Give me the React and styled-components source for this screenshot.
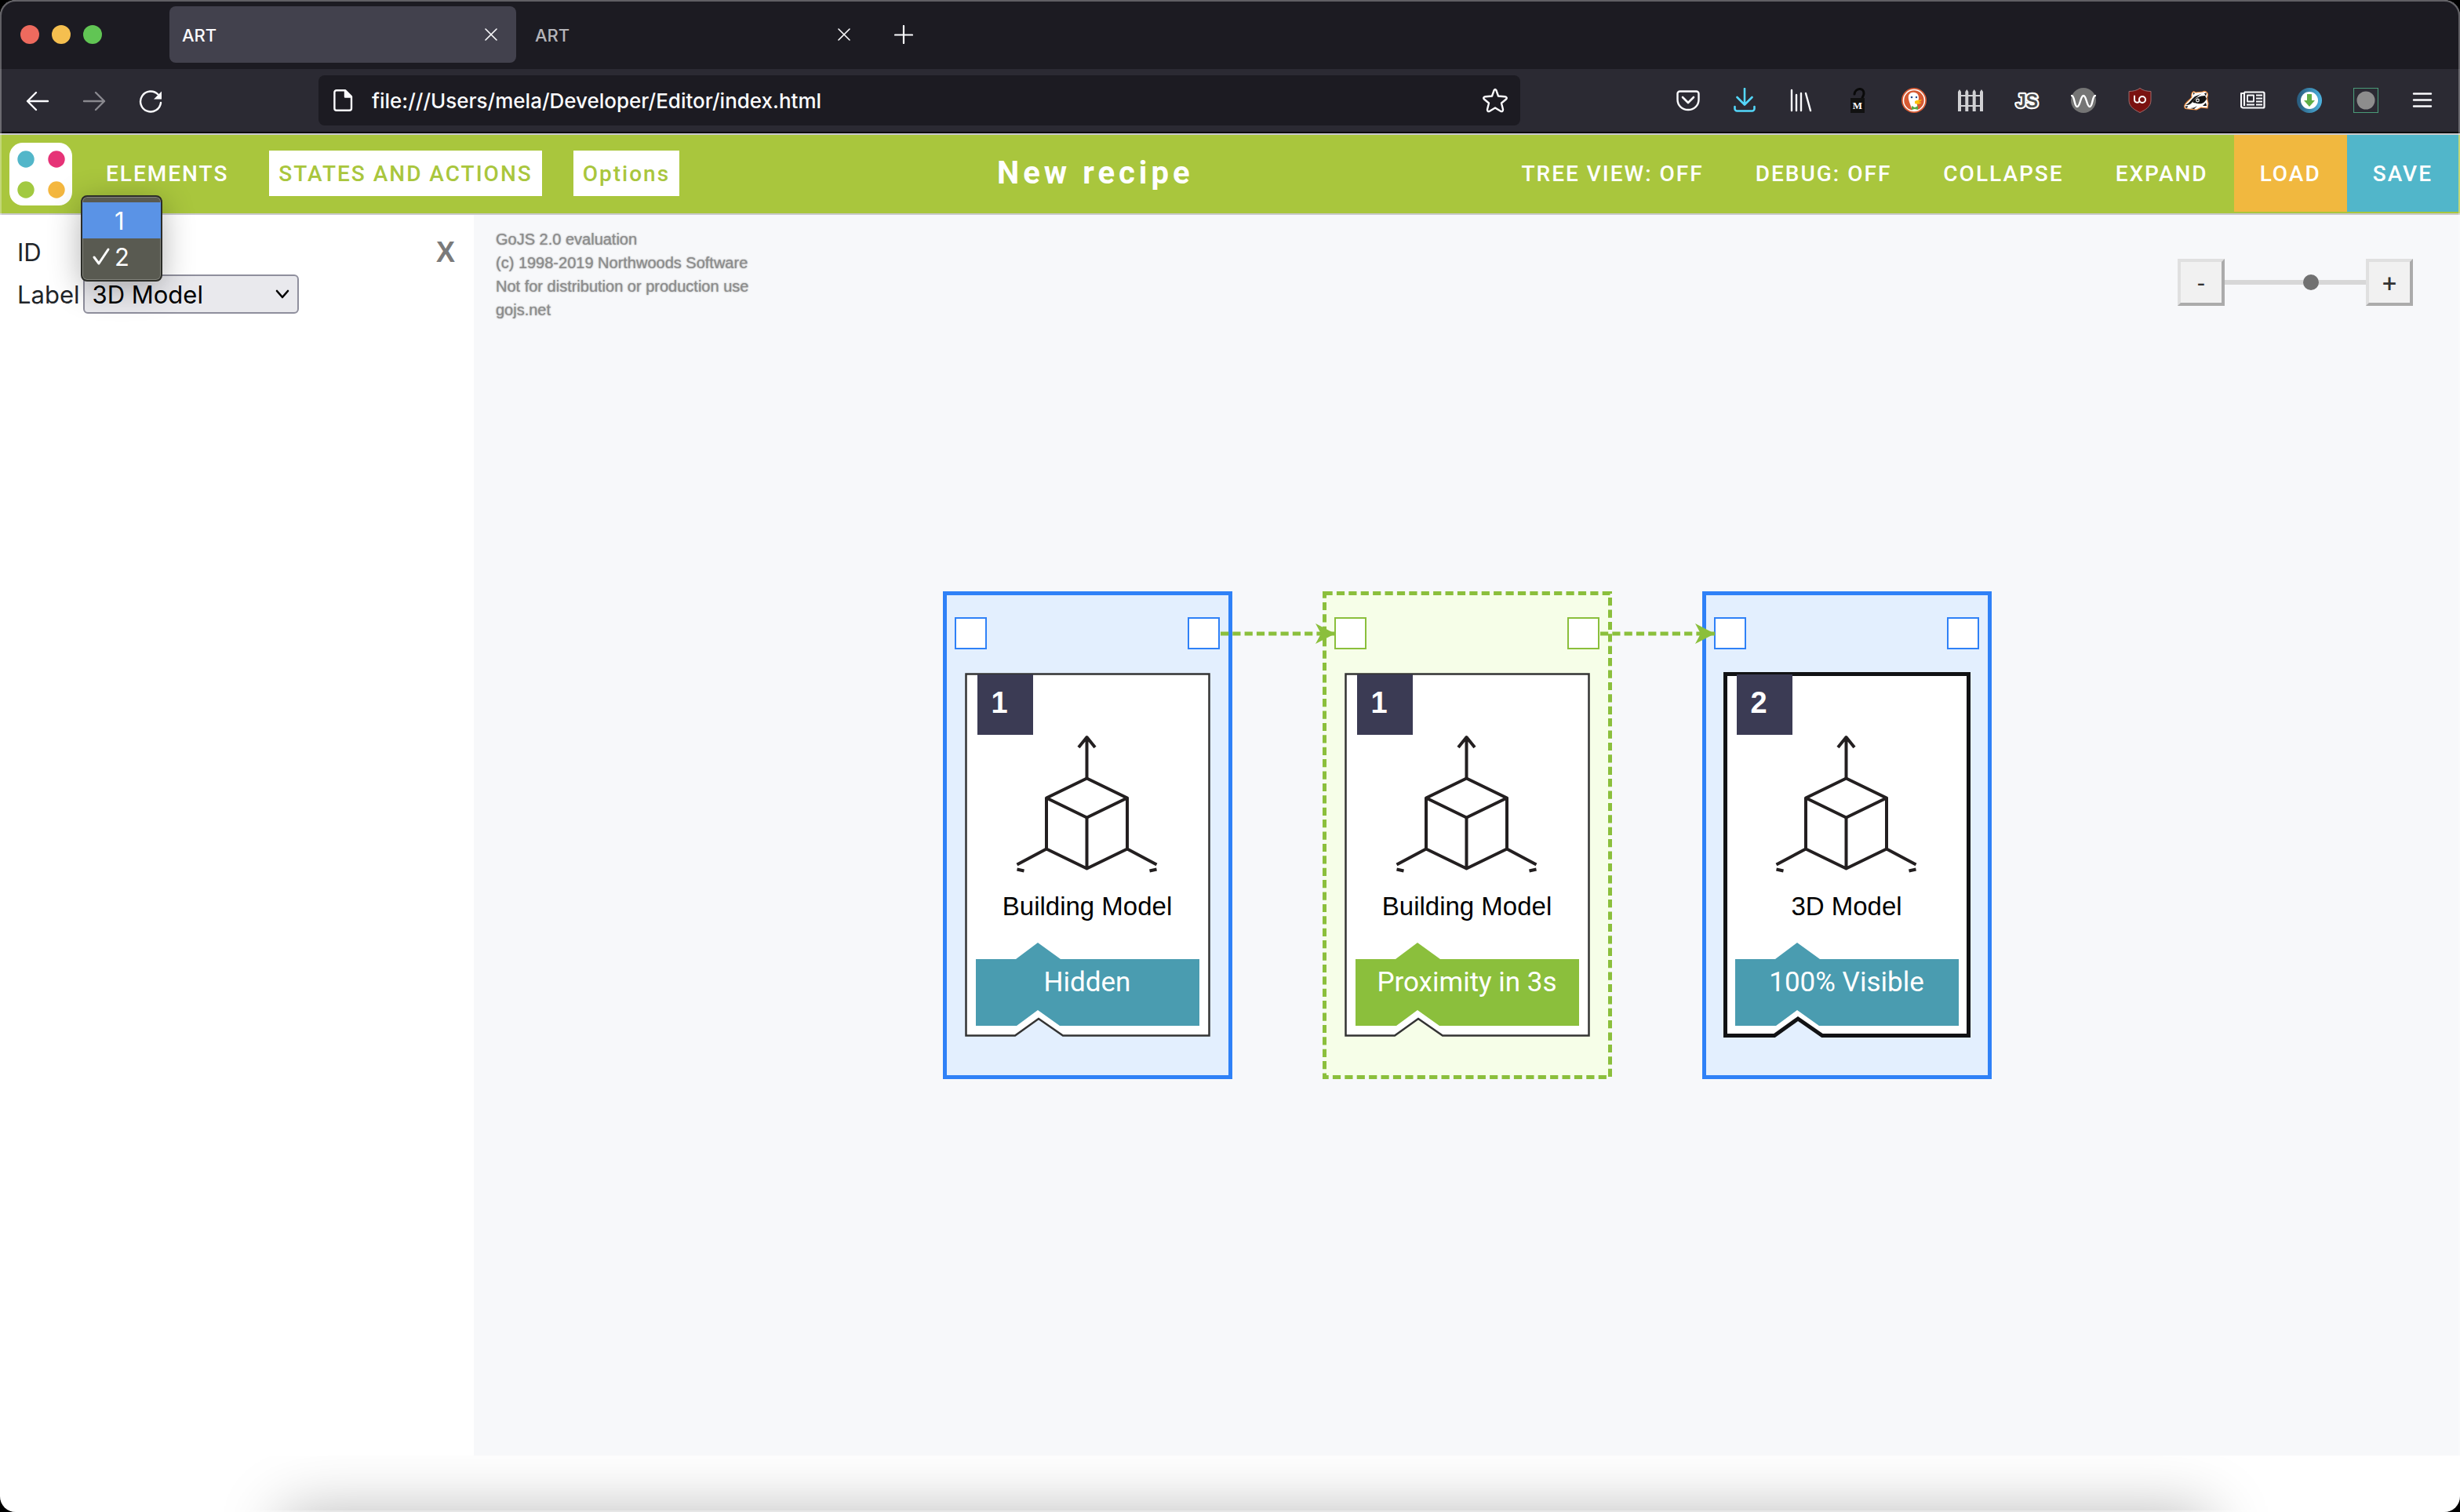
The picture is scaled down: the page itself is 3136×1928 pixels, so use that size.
import React, { useState } from "react";
import styled, { createGlobalStyle } from "styled-components";

const UI = `Inter, "Noto Sans", sans-serif`;
const BRAND = `Roboto, "Open Sans", sans-serif`;
const HELV = `"Liberation Sans", Arial, sans-serif`;

const GlobalStyle = createGlobalStyle`
  *, *::before, *::after { box-sizing: border-box; }
  body { margin: 0; background: #000; font-family: ${UI}; }
  button, input, select { font: inherit; margin: 0; }
`;

/* ---------- window ---------- */

const Window = styled.div`
  position: relative;
  display: flex;
  flex-direction: column;
  min-height: 100vh;
  border-radius: 20px;
  overflow: hidden;
  background: #fff;

  &::after {
    content: "";
    position: absolute;
    inset: 0;
    border: 2px solid rgba(255, 255, 255, 0.3);
    border-radius: 20px;
    pointer-events: none;
    z-index: 9;
  }
`;

const TabStrip = styled.div`
  display: flex;
  align-items: center;
  gap: 8px;
  height: 88px;
  padding-left: 26px;
  background: #1c1b22;
`;

const Lights = styled.div`
  display: flex;
  gap: 16px;
  width: 182px;
`;

const Light = styled.button`
  width: 24px;
  height: 24px;
  padding: 0;
  border: 0;
  border-radius: 50%;
  background: ${(p) => p.$color};
`;

const Tab = styled.div`
  display: flex;
  align-items: center;
  justify-content: space-between;
  width: 442px;
  height: 72px;
  padding: 0 16px;
  border-radius: 8px;
  background: ${(p) => (p.$active ? "#42414d" : "transparent")};
  color: ${(p) => (p.$active ? "#fbfbfe" : "#b4b4b9")};
`;

const TabTitle = styled.span`
  padding-top: 2px;
  font-size: 22px;
  font-weight: 500;
  line-height: 32px;
`;

const IconButton = styled.button`
  display: flex;
  align-items: center;
  justify-content: center;
  width: ${(p) => p.$w || 72}px;
  height: 48px;
  padding: 0;
  border: 0;
  background: none;
  color: #fbfbfe;
  opacity: ${(p) => (p.disabled ? 0.45 : 1)};
`;

const NavBar = styled.div`
  display: flex;
  align-items: center;
  height: 82px;
  padding: 0 12px;
  background: #2b2a33;
  border-bottom: 2px solid #0c0c0d;
`;

const Group = styled.div`
  display: flex;
  align-items: center;
`;

const UrlBar = styled.label`
  display: flex;
  flex: 1;
  align-items: center;
  gap: 20px;
  height: 64px;
  margin: 0 178px;
  padding: 0 8px 0 16px;
  border-radius: 8px;
  background: #1c1b22;
  color: #fbfbfe;
`;

const PageGlyph = styled.span`
  display: flex;
`;

const UrlInput = styled.input`
  flex: 1;
  min-width: 0;
  padding: 2px 0 0;
  border: 0;
  outline: 0;
  background: none;
  color: inherit;
  font-size: 26px;
  font-weight: 500;
  line-height: 36px;
`;

/* ---------- application header ---------- */

const Header = styled.header`
  display: flex;
  align-items: center;
  height: 104px;
  padding: 0 2px 0 12px;
  border: solid #c9c9cc;
  border-width: 2px 0;
  background: #a9c63d;
  font-family: ${BRAND};
`;

const ModeButton = styled.button`
  height: 58px;
  margin: 0 20px;
  padding: 0 12px;
  border: 0;
  background: ${(p) => (p.$boxed ? "#fff" : "transparent")};
  color: ${(p) => (p.$boxed ? "#a9c63d" : "#fff")};
  font-size: 28px;
  font-weight: 500;
  letter-spacing: 2px;
  white-space: nowrap;
`;

const Modes = styled.div`
  display: flex;
  padding: 0 0 2px 11px;
`;

const Title = styled.h1`
  flex: 1;
  margin: 0;
  padding-bottom: 2px;
  color: #fff;
  font-size: 40px;
  font-weight: 700;
  line-height: 48px;
  letter-spacing: 5px;
  text-align: center;
  white-space: nowrap;
`;

const Action = styled.button`
  height: 98px;
  margin-bottom: 2px;
  padding: 0 33px;
  border: 0;
  background: ${(p) => p.$bg || "transparent"};
  color: #fff;
  font-size: 28px;
  font-weight: 500;
  letter-spacing: 2px;
  white-space: nowrap;
`;

/* ---------- body ---------- */

const Body = styled.main`
  display: flex;
  flex: 1;
`;

const SidePanel = styled.aside`
  width: 604px;
  padding: 20px 24px 20px 22px;
  color: #212529;
  font-size: 31px;
`;

const Field = styled.div`
  position: relative;
  display: flex;
  align-items: center;
  gap: 4px;
  height: 54px;
`;

const CloseButton = styled.button`
  margin-left: auto;
  padding: 2px 0 0;
  border: 0;
  background: none;
  color: #7a7a7a;
  font-family: ${HELV};
  font-size: 36px;
  font-weight: 700;
`;

const SelectBox = styled.div`
  display: grid;
  align-items: center;
  width: 275px;

  & > * { grid-area: 1 / 1; }
  & > svg { justify-self: end; margin-right: 12px; pointer-events: none; }
`;

const Select = styled.select`
  appearance: none;
  width: 100%;
  height: 50px;
  padding: 0 10px;
  border: 2px solid #8f8f9d;
  border-radius: 6px;
  background: #e9e9ed;
  color: #000;
`;

const Popup = styled.ul`
  position: absolute;
  top: -45px;
  left: 81px;
  z-index: 3;
  width: 104px;
  margin: 0;
  padding: 7px 0;
  list-style: none;
  border: 2px solid #2c2d28;
  border-radius: 8px;
  background: #595a51;
  box-shadow: 0 8px 40px rgba(0, 0, 0, 0.3), inset 0 0 0 1px #83847c;
  color: #fff;
`;

const Option = styled.li`
  display: flex;
  align-items: center;
  gap: 5px;
  height: 46px;
  padding-left: 12px;
  background: ${(p) => (p.$hot ? "#5a93e6" : "transparent")};
`;

const Tick = styled.span`
  display: flex;
  width: 24px;
`;

const Canvas = styled.section`
  position: relative;
  display: flex;
  flex: 1;
  align-items: center;
  justify-content: center;
  background: #f7f8fa;
`;

const Watermark = styled.p`
  position: absolute;
  top: 16px;
  left: 28px;
  margin: 0;
  color: #8c8c8c;
  font-family: ${HELV};
  font-size: 20px;
  line-height: 30px;
  text-shadow: 0 0 2px #8c8c8c;
  white-space: pre-line;
`;

const ZoomBar = styled.div`
  position: absolute;
  top: 56px;
  right: 60px;
  display: flex;
  align-items: center;
`;

const ZoomButton = styled.button`
  width: 60px;
  height: 60px;
  padding: 2px 0 0;
  border: 4px solid;
  border-color: #e0e0e0 #ababab #ababab #e0e0e0;
  background: #f1f1f1;
  color: #333;
  font-family: ${BRAND};
  font-size: 32px;
`;

const Range = styled.input`
  appearance: none;
  width: 180px;
  height: 20px;
  background: linear-gradient(#d7d7d7, #d7d7d7) center / 100% 6px no-repeat;

  &::-webkit-slider-thumb {
    appearance: none;
    width: 20px;
    height: 20px;
    border-radius: 50%;
    background: #717171;
  }
`;

const Flow = styled.div`
  display: flex;
  gap: 115px;
`;

const Node = styled.article`
  position: relative;
  width: 369px;
  height: 622px;
  padding: 33px 16px 33px 15px;
`;

const Backdrop = styled.svg`
  position: absolute;
  top: 0;
  left: 0;
  overflow: visible;
`;

const Ports = styled.div`
  position: relative;
  display: flex;
  justify-content: space-between;
`;

const Port = styled.span`
  width: 41px;
  height: 41px;
  border: 2px solid ${(p) => p.$color};
  background: #fff;
`;

const LinkArrow = styled.svg`
  position: absolute;
  z-index: 1;
  top: 41px;
  left: 354px;
`;

const Card = styled.div`
  position: relative;
  display: flex;
  flex-direction: column;
  align-items: center;
  width: 313px;
  height: 464px;
  margin: 30px 0 0 13px;
  padding-top: 2px;
`;

const Badge = styled.span`
  position: relative;
  align-self: flex-start;
  width: 71px;
  height: 77px;
  margin-left: 16px;
  padding-left: 18px;
  background: #3b3b54;
  color: #fff;
  font-family: ${HELV};
  font-size: 38px;
  font-weight: 700;
  line-height: 72px;
`;

const CubeArt = styled.svg`
  position: relative;
  width: 182px;
  height: 178px;
`;

const CardTitle = styled.h2`
  position: relative;
  margin: 21px 0 26px;
  color: #000;
  font-family: ${HELV};
  font-size: 33px;
  font-weight: 400;
  line-height: 40px;
`;

const Banner = styled.div`
  position: relative;
  width: 285px;
  height: 106px;
  padding-top: 31px;
  color: #fff;
  font-family: ${BRAND};
  font-size: 35px;
  line-height: 40px;
  text-align: center;
`;

const BannerText = styled.span`
  position: relative;
`;

const Footer = styled.footer`
  height: 72px;
  padding: 72px 320px 0 360px;
  overflow: hidden;
`;

const DockShadow = styled.div`
  height: 200px;
  box-shadow: 0 0 80px rgba(0, 0, 0, 0.28);
`;

/* ---------- icons ---------- */

const Svg = ({ size = 32, children, ...rest }) => (
  <svg
    width={size}
    height={size}
    viewBox={`0 0 ${size} ${size}`}
    fill="none"
    stroke="currentColor"
    strokeWidth="2.4"
    strokeLinecap="round"
    strokeLinejoin="round"
    aria-hidden="true"
    {...rest}
  >
    {children}
  </svg>
);

const CloseIcon = () => (
  <Svg size={16} strokeWidth="1.6"><path d="M1 1l14 14M15 1L1 15" /></Svg>
);
const PlusIcon = () => (
  <Svg size={24} strokeWidth="2.2"><path d="M12 1v22M1 12.500h22" /></Svg>
);
const BackIcon = () => (
  <Svg><path d="M3 17h26M14 6L3 17l11 11" /></Svg>
);
const ForwardIcon = () => (
  <Svg><path d="M3 17h26M18 6l11 11-11 11" /></Svg>
);
const ReloadIcon = () => (
  <Svg>
    <path d="M29 19a13 13 0 1 1-3.500-10.500" />
    <path d="M30 4.500v10H20z" fill="currentColor" stroke="none" />
  </Svg>
);
const PageIcon = () => (
  <Svg>
    <path d="M7 3.200h11l8 8v15a2.600 2.600 0 0 1-2.600 2.600H7a2.600 2.600 0 0 1-2.600-2.600v-20.400A2.600 2.600 0 0 1 7 3.200z" />
    <path d="M18 4v7.500h7.500z" fill="currentColor" />
  </Svg>
);
const StarIcon = () => (
  <Svg>
    <path d="M14.600 3.100Q16 .8 17.400 3.100L20 10.500 28.500 11.200Q32 12 30 14.500L24 19.500 26 27.500Q26 31 23 29.800L16 25.500 9 29.800Q6 31 6 27.500L8 19.500 2 14.500Q0 12 3.500 11.200L12 10.500z" />
  </Svg>
);
const PocketIcon = () => (
  <Svg>
    <path d="M5.500 4.500h21a3 3 0 0 1 3 3V15c0 7.500-6 13-13.500 13S2.500 22.500 2.500 15V7.500a3 3 0 0 1 3-3z" />
    <path d="M9 12l7 7 7-7" strokeWidth="2.600" />
  </Svg>
);
const DownloadIcon = () => (
  <Svg stroke="#54d7fb" strokeWidth="2.600">
    <path d="M16 1v20M6.500 12l9.500 9.500 9.500-9.500M3.500 24v2.500a3 3 0 0 0 3 3h19a3 3 0 0 0 3-3V24" />
  </Svg>
);
const LibraryIcon = () => (
  <Svg><path d="M4 3v26M10 9v20M16 7v22M22 7l6 22" /></Svg>
);
const LockIcon = () => (
  <Svg>
    <path d="M12 8c1-8 12-9 12-1 0 4-3 5-2 8" stroke="#0a0a0a" strokeWidth="3" />
    <rect x="7" y="13" width="18" height="19" fill="#111" stroke="none" />
    <text x="16" y="27" textAnchor="middle" fill="#fff" stroke="none" fontFamily="Liberation Serif, serif" fontWeight="700" fontSize="13">M</text>
  </Svg>
);
const DuckIcon = () => (
  <Svg stroke="none">
    <circle cx="16" cy="16" r="16" fill="#d65a33" />
    <circle cx="16" cy="16" r="13.500" stroke="#fff" strokeWidth="1.500" />
    <path d="M14 29C11 20 8 15 9 10c1-4 5-5 8-4 4 1 5 4 5 7 0 4-3 6-2 9l1 6q-4 1.500-7 1z" fill="#fff" />
    <path d="M17 17c3-2 6-1 9-2-1 2-3 2.500-4 3 1 1 3 0 3 1-1 2-5 2-8 1z" fill="#fdc20b" />
    <path d="M13 23l4 2 4-2v5l-4-1-4 1z" fill="#57a846" />
    <circle cx="13" cy="12" r="1.300" fill="#2d4f8e" />
    <circle cx="19" cy="12" r="1.200" fill="#2d4f8e" />
  </Svg>
);
const FenceIcon = () => (
  <Svg stroke="none" fill="#d0d0d3">
    <path d="M0 30V5l2-3 2 3v25zM9.300 30V5l2-3 2 3v25zM18.700 30V5l2-3 2 3v25zM28 30V5l2-3 2 3v25z" />
    <path d="M0 9h32v2H0zM0 22h32v2H0z" />
  </Svg>
);
const ScriptIcon = () => (
  <Svg>
    <text x="16" y="25" textAnchor="middle" fill="#4a4a4a" stroke="#fff" strokeWidth="4.500" paintOrder="stroke" fontFamily="Liberation Sans, sans-serif" fontWeight="700" fontSize="23">JS</text>
  </Svg>
);
const WaveIcon = () => (
  <Svg>
    <circle cx="16" cy="16" r="16" fill="#757575" stroke="none" />
    <path d="M1 10c4 0 3 14 7 14s4-14 8-14 4 14 8 14 3-14 7-14" stroke="#fff" />
  </Svg>
);
const ShieldIcon = () => (
  <Svg>
    <path d="M16 .5c4 3 9 4 14 4V16c0 8-7 12-14 15.500C9 28 2 24 2 16V4.500c5 0 10-1 14-4z" fill="#7a1210" stroke="#9b6a6c" strokeWidth="1" />
    <path d="M9 10.500v5a3.500 3.500 0 0 0 6.500 1.500" stroke="#fff" strokeWidth="2" />
    <circle cx="19" cy="15" r="4" stroke="#fff" strokeWidth="2" />
  </Svg>
);
const BadgerIcon = () => (
  <Svg stroke="none">
    <path d="M.6 24C.6 19 6 17 10 12 9 6 12 3 15 6l9-1c3-2 8 1 6 6-1 2 0 5 1 9l-1 6-8-1-6 3-10-1c-4 0-5.400-1-5.400-3z" fill="#fff" stroke="#e8883a" strokeWidth="1.200" />
    <path d="M2 22c5-2 7-7 12-11l10-4c-4 2-10 6-13 11-3 4-6 4-9 4z" fill="#151515" />
    <path d="M11 18c3-5 9-8 16-8l2 4c-3 6-7 7-12 6-3-1-4 0-6-2z" fill="#151515" />
    <circle cx="17.500" cy="16" r="2.400" fill="#fff" />
    <circle cx="17.500" cy="16" r="1.200" fill="#151515" />
    <path d="M12 6l2 1-2 2zM26 7l3-.5-1 4zM1 24l4-1-1 3zM8 26c4 0 6-1 9-3l-4 4zM24 23l4-4 1 4z" fill="#151515" />
  </Svg>
);
const NewsIcon = () => (
  <Svg strokeWidth="2.200" strokeLinecap="butt">
    <path d="M5 5.500h24a1.500 1.500 0 0 1 1.500 1.500v17a1.500 1.500 0 0 1-1.500 1.500H3.500A2.500 2.500 0 0 1 1 23V7h3.500M5 5.500V23" />
    <path d="M9 9.500h8v8H9zM20 9.500h8M20 13.500h8M20 17.500h8M8 21.500h10M20 21.500h8" strokeWidth="1.800" />
  </Svg>
);
const SaverIcon = () => (
  <Svg stroke="none">
    <defs>
      <linearGradient id="saver"><stop offset="0" stopColor="#28597b" /><stop offset="1" stopColor="#4db3e0" /></linearGradient>
    </defs>
    <circle cx="16" cy="16" r="16" fill="url(#saver)" />
    <circle cx="16" cy="16" r="11" fill="#fff" />
    <path d="M13 8h6v8h4l-7 8-7-8h4z" fill="#5fae47" />
  </Svg>
);
const RecordIcon = () => (
  <Svg stroke="none">
    <rect x=".5" y=".5" width="31" height="31" stroke="#4a9a78" strokeWidth="1.200" />
    <circle cx="16" cy="16" r="11.500" fill="#8d8d8d" />
  </Svg>
);
const MenuIcon = () => (
  <Svg><path d="M5 7.500h22M5 15.500h22M5 23.500h22" /></Svg>
);

const Logo = () => (
  <svg width="80" height="80" viewBox="0 0 80 80" role="img" aria-label="Logo">
    <rect width="80" height="80" rx="17" fill="#fff" />
    <circle cx="21" cy="21" r="10.700" fill="#52b6c9" />
    <circle cx="60" cy="21" r="10.700" fill="#e63377" />
    <circle cx="21" cy="60" r="10.700" fill="#a2c940" />
    <circle cx="60" cy="60" r="10.700" fill="#f4b73f" />
  </svg>
);

const Cube = () => (
  <CubeArt viewBox="0 0 182 178" fill="none" stroke="#231f20" strokeWidth="4" strokeLinejoin="round" aria-hidden="true">
    <path d="M90.500 55.500V4M80 16l10.500-13L101 16" />
    <path d="M90.500 55.500l51.500 25-51.500 25L39 80.500z" />
    <path d="M39 80.500v65l51.500 25L142 145.500v-65M90.500 105.500v65" />
    <path d="M39 145.500L1.500 165.500M142 145.500l37.500 20M1.500 171.500l9 2M179.500 171.500l-9 2" />
  </CubeArt>
);

/* ---------- diagram ---------- */

const KINDS = {
  state: { stroke: "#2f81f7", fill: "#e3effe", banner: "#4a9cb0" },
  action: { stroke: "#8bbf3c", fill: "#f6fee8", banner: "#8bbf3c", dash: "10.2 5.2" },
};

const NODES = [
  { id: "a", kind: "state", number: 1, name: "Building Model", status: "Hidden" },
  { id: "b", kind: "action", number: 1, name: "Building Model", status: "Proximity in 3s" },
  { id: "c", kind: "state", number: 2, name: "3D Model", status: "100% Visible", selected: true },
];

const Link = () => (
  <LinkArrow width="148" height="26" viewBox="0 0 148 26" aria-hidden="true">
    <path d="M0 13h146" stroke="#8bbf3c" strokeWidth="5" strokeDasharray="10.2 5.1" />
    <path d="M121 0l25 13-25 13 7-13z" fill="#8bbf3c" />
  </LinkArrow>
);

function DiagramNode({ kind, number, name, status, selected, linked }) {
  const look = KINDS[kind];
  return (
    <Node>
      <Backdrop width="369" height="622" aria-hidden="true">
        <rect x="2.500" y="2.500" width="364" height="617" fill={look.fill} stroke={look.stroke} strokeWidth="5" strokeDasharray={look.dash} />
      </Backdrop>
      <Ports>
        <Port $color={look.stroke} />
        <Port $color={look.stroke} />
      </Ports>
      {linked && <Link />}
      <Card>
        <Backdrop width="313" height="464" aria-hidden="true">
          <path
            d="M1.500 1.500H311.500V462.500H125L94 441 64 462.500H1.500z"
            fill="#fff"
            stroke={selected ? "#111214" : "#333"}
            strokeWidth={selected ? 5 : 2.5}
          />
        </Backdrop>
        <Badge>{number}</Badge>
        <Cube />
        <CardTitle>{name}</CardTitle>
        <Banner>
          <Backdrop width="285" height="106" aria-hidden="true">
            <path d="M0 21H51L79 0 108 21H285V106H107L79 86 52 106H0z" fill={look.banner} />
          </Backdrop>
          <BannerText>{status}</BannerText>
        </Banner>
      </Card>
    </Node>
  );
}

const TOOLS = [
  ["Save to Pocket", PocketIcon],
  ["Downloads", DownloadIcon],
  ["Library", LibraryIcon],
  ["Unlock", LockIcon],
  ["Privacy", DuckIcon],
  ["Fence", FenceIcon],
  ["Scripts", ScriptIcon],
  ["Wave", WaveIcon],
  ["Blocker", ShieldIcon],
  ["Badger", BadgerIcon],
  ["Reader", NewsIcon],
  ["Saver", SaverIcon],
  ["Recorder", RecordIcon],
  ["Menu", MenuIcon],
];

export default function App() {
  const [zoom, setZoom] = useState(5);
  const [url, setUrl] = useState("file:///Users/mela/Developer/Editor/index.html");

  return (
    <>
      <GlobalStyle />
      <Window>
        <TabStrip>
          <Lights>
            <Light $color="#ed6a5e" aria-label="Close window" />
            <Light $color="#f5bf4f" aria-label="Minimize window" />
            <Light $color="#61c554" aria-label="Zoom window" />
          </Lights>
          <Tab $active>
            <TabTitle>ART</TabTitle>
            <IconButton $w={32} aria-label="Close tab"><CloseIcon /></IconButton>
          </Tab>
          <Tab>
            <TabTitle>ART</TabTitle>
            <IconButton $w={32} aria-label="Close tab"><CloseIcon /></IconButton>
          </Tab>
          <IconButton aria-label="New tab"><PlusIcon /></IconButton>
        </TabStrip>

        <NavBar>
          <Group>
            <IconButton aria-label="Back"><BackIcon /></IconButton>
            <IconButton aria-label="Forward" disabled><ForwardIcon /></IconButton>
            <IconButton aria-label="Reload"><ReloadIcon /></IconButton>
          </Group>
          <UrlBar>
            <PageGlyph><PageIcon /></PageGlyph>
            <UrlInput aria-label="Address" value={url} onChange={(e) => setUrl(e.target.value)} />
            <IconButton $w={48} aria-label="Bookmark"><StarIcon /></IconButton>
          </UrlBar>
          <Group>
            {TOOLS.map(([name, Icon]) => (
              <IconButton key={name} aria-label={name}><Icon /></IconButton>
            ))}
          </Group>
        </NavBar>

        <Header>
          <Logo />
          <Modes>
            <ModeButton>ELEMENTS</ModeButton>
            <ModeButton $boxed>STATES AND ACTIONS</ModeButton>
            <ModeButton $boxed>Options</ModeButton>
          </Modes>
          <Title>New recipe</Title>
          <Action>TREE VIEW: OFF</Action>
          <Action>DEBUG: OFF</Action>
          <Action>COLLAPSE</Action>
          <Action>EXPAND</Action>
          <Action $bg="#f1b83f">LOAD</Action>
          <Action $bg="#51b6ca">SAVE</Action>
        </Header>

        <Body>
          <SidePanel>
            <Field>
              <span id="id-label">ID</span>
              <Popup role="listbox" aria-labelledby="id-label">
                <Option role="option" aria-selected="false" $hot>
                  <Tick />1
                </Option>
                <Option role="option" aria-selected="true">
                  <Tick>
                    <Svg size={24} strokeWidth="3"><path d="M3 13l6 8L21 3" /></Svg>
                  </Tick>
                  2
                </Option>
              </Popup>
              <CloseButton aria-label="Close panel">X</CloseButton>
            </Field>
            <Field>
              <label htmlFor="label-select">Label</label>
              <SelectBox>
                <Select id="label-select" defaultValue="3D Model">
                  <option>3D Model</option>
                  <option>Building Model</option>
                </Select>
                <Svg size={18} stroke="#000" strokeWidth="2.600"><path d="M2 5l7 8 7-8" /></Svg>
              </SelectBox>
            </Field>
          </SidePanel>

          <Canvas>
            <Watermark>
              {"GoJS 2.0 evaluation\n(c) 1998-2019 Northwoods Software\nNot for distribution or production use\ngojs.net"}
            </Watermark>
            <ZoomBar>
              <ZoomButton onClick={() => setZoom(Math.max(0, zoom - 1))}>-</ZoomButton>
              <Range type="range" min="0" max="8" aria-label="Zoom" value={zoom} onChange={(e) => setZoom(Number(e.target.value))} />
              <ZoomButton onClick={() => setZoom(Math.min(8, zoom + 1))}>+</ZoomButton>
            </ZoomBar>
            <Flow>
              {NODES.map((node, i) => (
                <DiagramNode key={node.id} {...node} linked={i < NODES.length - 1} />
              ))}
            </Flow>
          </Canvas>
        </Body>

        <Footer><DockShadow /></Footer>
      </Window>
    </>
  );
}
